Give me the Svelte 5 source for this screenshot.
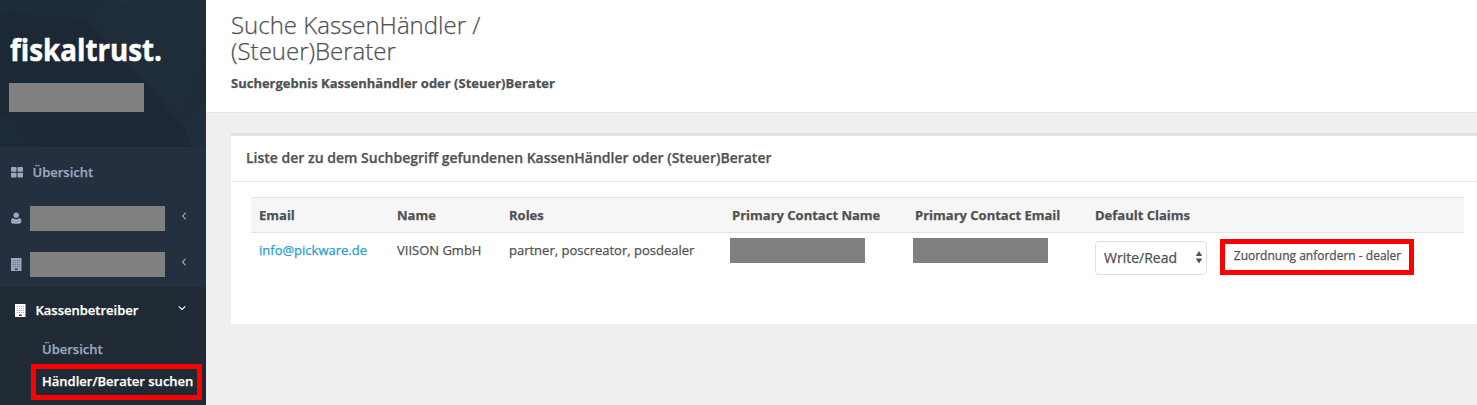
<script lang="ts">
    const columns: { label: string, width: number }[] = [
        { label: "Email", width: 138 },
        { label: "Name", width: 112 },
        { label: "Roles", width: 223 },
        { label: "Primary Contact Name", width: 183 },
        { label: "Primary Contact Email", width: 180 },
        { label: "Default Claims", width: 125 },
        { label: "", width: 252 }
    ];

    const results = [
        { email: "info@pickware.de", name: "VIISON GmbH", roles: ["partner", "poscreator", "posdealer"] }
    ];

    // window rows and columns of the building icon
    const rows = [2, 4, 6, 8];
    const cols = [2, 4, 6, 8];
</script>

{#snippet building()}
    <svg class="building" viewBox="0 0 11 13">
        <path fill="currentColor" d="M0 0h10.500v13H0z" />
        {#each rows as y}
            {#each cols as x}
                <rect x={x - 0.2} {y} width="1" height="1" class="window" />
            {/each}
        {/each}
        <rect x="4" y="10.500" width="2.600" height="1.500" class="door" />
    </svg>
{/snippet}

<div class="wrapper">
    <nav class="sidebar">
        <div class="profile">
            <svg class="facets" viewBox="0 0 206 147" preserveAspectRatio="none">
                <path fill="#1d2c3a" d="M0 12L86 19 107 0H0z" />
                <path fill="#1e2f3f" d="M86 19L107 0H133z" />
                <path fill="#1f2d39" d="M86 19L133 0H206V103L183 125z" />
                <path fill="#1f2c38" d="M183 125L206 50V103z" />
                <path fill="#1f2e3d" d="M183 125L206 103V147H192z" />
                <path fill="#1d2b37" d="M0 113L12 117 37 147H0z" />
            </svg>
            <svg class="logo" width="180" height="36" viewBox="0 0 180 36">
                <text x="1" y="29" textLength="152" lengthAdjust="spacingAndGlyphs">fiskaltrust.</text>
            </svg>
            <div class="redacted user"></div>
        </div>

        <ul class="menu">
            <li class="first">
                <svg class="icon" width="13" height="11" viewBox="0 0 13 11">
                    <g fill="currentColor">
                        <rect width="5.500" height="4.800" rx="0.8" />
                        <rect x="6.500" width="5.500" height="4.800" rx="0.8" />
                        <rect y="5.700" width="5.500" height="4.800" rx="0.8" />
                        <rect x="6.500" y="5.700" width="5.500" height="4.800" rx="0.8" />
                    </g>
                </svg>
                <span>Übersicht</span>
            </li>
            <li>
                <svg class="icon" width="11" height="12" viewBox="0 0 11 12">
                    <path fill="currentColor" d="M2 6C.7 6.300 0 7.500 0 9.300c0 1.400.9 2.400 2.200 2.400h6c1.300 0 2.200-1 2.200-2.400C10.400 7.500 9.700 6.300 8.400 6a4.600 4.600 0 0 1-6.400 0z" />
                    <circle cx="5.200" cy="3.300" r="2.700" fill="currentColor" />
                </svg>
                <div class="redacted"></div>
                <svg class="arrow" width="6" height="8" viewBox="0 0 6 8"><path d="M4.700.7L1.500 4l3.200 3.300" /></svg>
            </li>
            <li>
                {@render building()}
                <div class="redacted"></div>
                <svg class="arrow" width="6" height="8" viewBox="0 0 6 8"><path d="M4.700.7L1.500 4l3.200 3.300" /></svg>
            </li>
        </ul>

        <div class="active">
            <div class="group">
                {@render building()}
                <span>Kassenbetreiber</span>
                <svg class="arrow down" width="8" height="6" viewBox="0 0 8 6"><path d="M.7 1.300L4 4.500l3.300-3.200" /></svg>
            </div>
            <div class="sub">Übersicht</div>
            <div class="sub selected">Händler/Berater suchen</div>
        </div>
    </nav>

    <main>
        <header>
            <h2>Suche KassenHändler / (Steuer)Berater</h2>
            <strong>Suchergebnis Kassenhändler oder (Steuer)Berater</strong>
        </header>

        <section class="ibox">
            <h5>Liste der zu dem Suchbegriff gefundenen KassenHändler oder (Steuer)Berater</h5>
            <div class="content">
                <table>
                    <colgroup>
                        {#each columns as column}
                            <col style="width: {column.width}px" />
                        {/each}
                    </colgroup>
                    <thead>
                        <tr>
                            {#each columns as column}
                                <th>{column.label}</th>
                            {/each}
                        </tr>
                    </thead>
                    <tbody>
                        {#each results as result}
                            <tr>
                                <td><a href="mailto:{result.email}">{result.email}</a></td>
                                <td>{result.name}</td>
                                <td>{result.roles.join(", ")}</td>
                                <td class="hidden-cell"><div class="redacted"></div></td>
                                <td class="hidden-cell"><div class="redacted"></div></td>
                                <td>
                                    <button class="select">
                                        Write/Read
                                        <svg width="8" height="13" viewBox="0 0 8 13">
                                            <path fill="currentColor" d="M4 0l3.200 5H.8zM4 12.500l3.200-5H.8z" />
                                        </svg>
                                    </button>
                                </td>
                                <td><button class="request">Zuordnung anfordern - dealer</button></td>
                            </tr>
                        {/each}
                    </tbody>
                </table>
            </div>
        </section>
    </main>
</div>

<style>
    :global(body) {
        background: #efefef;
        overflow: hidden;
    }

    .wrapper {
        display: flex;
        height: 405px;
        font-family: "Open Sans", "Noto Sans", sans-serif;
        font-size: 13px;
        line-height: 18px;
        color: #505152;
        -webkit-text-stroke: 0.25px currentColor;
    }

    .sidebar {
        width: 206px;
        flex: none;
        display: flex;
        flex-direction: column;
        background: #243040;
        color: #9ba7bd;
        font-weight: 600;
    }

    .profile {
        position: relative;
        box-sizing: border-box;
        height: 147px;
        padding: 32px 9px 0;
        background: #1c2935;
    }

    .facets {
        position: absolute;
        inset: 0;
        width: 100%;
        height: 100%;
    }

    .logo {
        position: relative;
        display: block;
        overflow: visible;
    }

    .logo text {
        fill: #fff;
        stroke: #fff;
        stroke-width: 0.5;
        font-size: 31px;
        font-weight: 700;
    }

    .redacted {
        width: 135px;
        height: 25px;
        background: #808080;
    }

    .user {
        position: relative;
        height: 29px;
        margin-top: 15px;
    }

    .menu {
        list-style: none;
        margin: 0;
        padding: 2px 0 0;
        height: 138px;
    }

    .menu li {
        display: flex;
        align-items: center;
        height: 46px;
        padding-left: 11px;
    }

    .menu .first span {
        margin-left: 8.500px;
    }

    .menu .redacted {
        margin-left: 8px;
    }

    .building {
        width: 11px;
        height: 13px;
        flex: none;
    }

    .window {
        fill: #243040;
        opacity: 0.5;
    }

    .door {
        fill: #243040;
    }

    .arrow {
        margin: 0 0 5px 16px;
        fill: none;
        stroke: currentColor;
        stroke-width: 1.1;
    }

    .active {
        flex: 1;
        background: #1f2a34;
    }

    .group {
        display: flex;
        align-items: center;
        height: 46px;
        padding: 0 20px 0 15px;
        color: #fff;
    }

    .group span {
        margin-left: 9.500px;
    }

    .down {
        margin: 0 0 5px auto;
    }

    .sub {
        margin-left: 42px;
        padding: 7px 0;
        white-space: nowrap;
    }

    .selected {
        box-sizing: border-box;
        width: 171px;
        height: 36px;
        margin: -1px 0 0 31px;
        padding: 3px 0 0 6px;
        border: 5px solid #f00;
        color: #fff;
    }

    main {
        flex: 1;
        min-width: 0;
    }

    header {
        box-sizing: border-box;
        height: 113px;
        padding: 12px 25px 0;
        background: #fff;
        border-bottom: 1px solid #e3e6ea;
    }

    h2 {
        width: 300px;
        margin: 0 0 10px;
        font-size: 24px;
        font-weight: 300;
        line-height: 26px;
    }

    .ibox {
        height: 188px;
        margin: 20px 0 0 25px;
        background: #fff;
        border-top: 3px solid #dfe3e7;
    }

    h5 {
        height: 45px;
        margin: 0;
        padding-left: 15px;
        border-bottom: 1px solid #e3e4e6;
        font-size: 14px;
        font-weight: 600;
        line-height: 44px;
    }

    .content {
        padding: 15px 13px 0 20px;
    }

    table {
        width: 1213px;
        table-layout: fixed;
        border-collapse: separate;
        border-spacing: 0;
    }

    th {
        height: 34px;
        padding: 0 8px;
        background: #f6f6f6;
        border-top: 1px solid #e3e4e6;
        border-bottom: 1px solid #e3e4e6;
        text-align: left;
        font-weight: 700;
        white-space: nowrap;
    }

    td {
        padding: 8px 8px 0;
        vertical-align: top;
        white-space: nowrap;
    }

    .hidden-cell {
        padding: 5px 6px 0;
    }

    a {
        color: #23a0ce;
        text-decoration: none;
    }

    button {
        font-family: inherit;
        color: inherit;
        background: #fff;
    }

    .select {
        display: flex;
        align-items: center;
        justify-content: space-between;
        box-sizing: border-box;
        width: 112px;
        height: 34px;
        padding: 0 3px 2px 8px;
        border: 1px solid #dedfe0;
        border-radius: 4px;
        font-size: 14px;
    }

    .request {
        display: block;
        box-sizing: border-box;
        width: 194px;
        height: 36px;
        margin-top: -2px;
        padding: 0 0 3px 1px;
        border: 5px solid #f00;
        font-size: 12px;
    }
</style>
